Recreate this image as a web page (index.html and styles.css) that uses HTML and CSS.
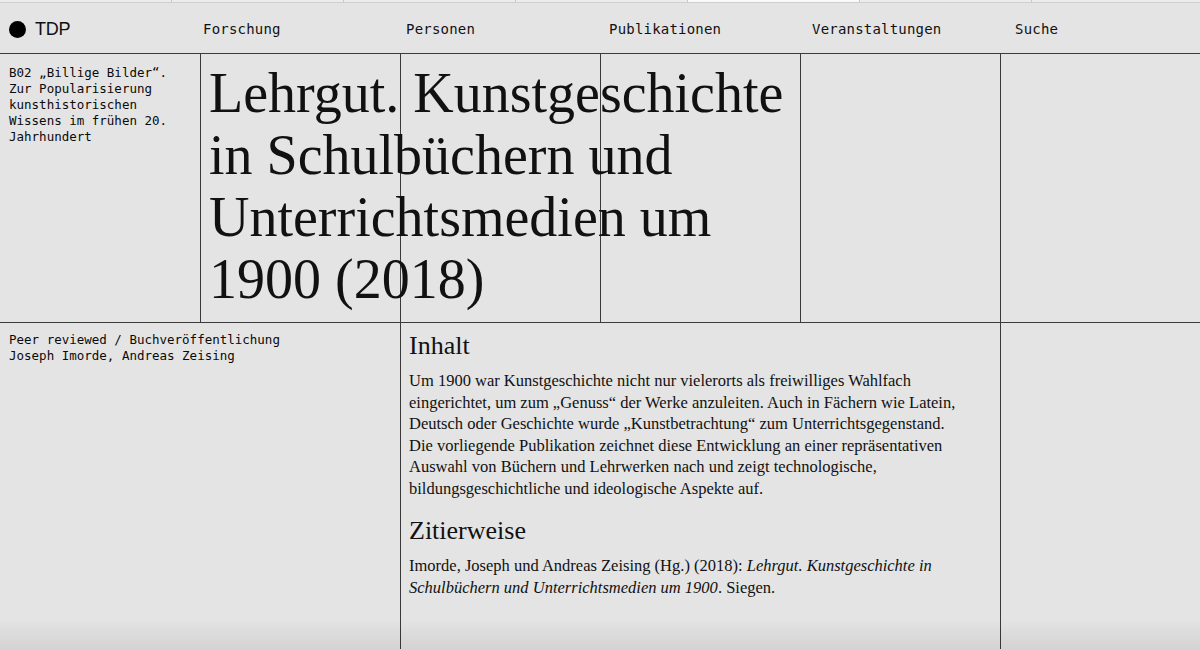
FILE: index.html
```html
<!DOCTYPE html>
<html lang="de">
<head>
<meta charset="utf-8">
<title>Lehrgut – TDP</title>
<link rel="stylesheet" href="styles.css">
</head>
<body>
<div class="tabs">
  <span class="tab"></span><span class="tab"></span><span class="tab"></span><span class="tab"></span><span class="tab active"></span><span class="tab"></span><span class="tab last"></span>
</div>
<header class="top">
  <div class="logo"><span class="dot"></span><span class="brand">TDP</span></div>
  <nav class="nav-item">Forschung</nav>
  <nav class="nav-item">Personen</nav>
  <nav class="nav-item">Publikationen</nav>
  <nav class="nav-item">Veranstaltungen</nav>
  <nav class="nav-item">Suche</nav>
</header>
<section class="row-one">
  <div class="cell c1"></div>
  <div class="cell c2 line"></div>
  <div class="cell c3 line"></div>
  <div class="cell c4 line"></div>
  <div class="cell c5 line"></div>
  <div class="cell c6 line"></div>
  <div class="project mono">B02 „Billige Bilder“.<br>Zur Popularisierung<br>kunsthistorischen<br>Wissens im frühen 20.<br>Jahrhundert</div>
  <h1 class="title">Lehrgut. Kunstgeschichte<br>in Schulbüchern und<br>Unterrichtsmedien um<br>1900 (2018)</h1>
</section>
<section class="row-two">
  <div class="meta mono">Peer reviewed / Buchveröffentlichung<br>Joseph Imorde, Andreas Zeising</div>
  <div class="content line">
    <h2 class="heading">Inhalt</h2>
    <p class="text">Um 1900 war Kunstgeschichte nicht nur vielerorts als freiwilliges Wahlfach<br>eingerichtet, um zum „Genuss“ der Werke anzuleiten. Auch in Fächern wie Latein,<br>Deutsch oder Geschichte wurde „Kunstbetrachtung“ zum Unterrichtsgegenstand.<br>Die vorliegende Publikation zeichnet diese Entwicklung an einer repräsentativen<br>Auswahl von Büchern und Lehrwerken nach und zeigt technologische,<br>bildungsgeschichtliche und ideologische Aspekte auf.</p>
    <h2 class="heading second">Zitierweise</h2>
    <p class="text">Imorde, Joseph und Andreas Zeising (Hg.) (2018): <em>Lehrgut. Kunstgeschichte in<br>Schulbüchern und Unterrichtsmedien um 1900</em>. Siegen.</p>
  </div>
  <div class="aside line"></div>
</section>
</body>
</html>
```
FILE: styles.css
```css
html, body {
  margin: 0;
  padding: 0;
  background: #e4e4e4;
  color: #111;
  height: 100%;
  overflow: hidden;
}
body::after {
  content: "";
  position: fixed;
  left: 0;
  right: 0;
  bottom: 0;
  height: 30px;
  background: linear-gradient(to bottom, rgba(0,0,0,0), rgba(0,0,0,0.07));
  pointer-events: none;
}
.tabs {
  display: flex;
  height: 2px;
  background: #ececec;
  border-bottom: 1px solid #cfcfcf;
}
.tab {
  width: 171px;
  border-right: 1px solid #c8c8c8;
}
.tab.active {
  background: #fafafa;
}
.tab.last {
  flex: 1;
  border-right: none;
}
.mono {
  font-family: "DejaVu Sans Mono", monospace;
  font-size: 12.5px;
  line-height: 16px;
  color: #0a0a0a;
}
.top {
  display: grid;
  grid-template-columns: repeat(5, 203px) 1fr;
  height: 51px;
  padding-top: 2px;
  box-sizing: border-box;
  align-items: center;
  border-bottom: 1px solid #3a3a3a;
}
.logo {
  display: flex;
  align-items: center;
  padding-left: 9px;
  gap: 9px;
}
.dot {
  width: 17px;
  height: 17px;
  border-radius: 50%;
  background: #000;
}
.brand {
  font-family: "Liberation Sans", Arial, sans-serif;
  font-size: 18px;
  letter-spacing: -0.2px;
}
.nav-item {
  font-family: "DejaVu Sans Mono", monospace;
  font-size: 14px;
  letter-spacing: 0.2px;
}
.row-one {
  display: grid;
  grid-template-columns: repeat(5, 200px) 1fr;
  height: 268px;
  border-bottom: 1px solid #3a3a3a;
}
.cell { grid-row: 1; }
.c1 { grid-column: 1; }
.c2 { grid-column: 2; }
.c3 { grid-column: 3; }
.c4 { grid-column: 4; }
.c5 { grid-column: 5; }
.c6 { grid-column: 6; }
.line {
  border-left: 1px solid #3a3a3a;
}
.project {
  grid-column: 1;
  grid-row: 1;
  padding: 11px 9px;
}
.title {
  grid-column: 2 / 5;
  grid-row: 1;
  margin: 0;
  padding: 8px 9px 0;
  font-family: "Liberation Serif", "Times New Roman", serif;
  font-weight: normal;
  font-size: 56px;
  line-height: 62px;
  letter-spacing: 0;
  white-space: nowrap;
}
.row-two {
  display: grid;
  grid-template-columns: 400px 600px 1fr;
  min-height: 340px;
}
.meta {
  padding: 9px 9px;
}
.content {
  padding: 8px 9px 0 8px;
}
.heading {
  margin: 0;
  font-family: "Liberation Serif", "Times New Roman", serif;
  font-weight: normal;
  font-size: 26px;
  line-height: 30px;
}
.heading.second {
  margin-top: 17px;
}
.text {
  margin: 9px 0 0;
  font-family: "Liberation Serif", "Times New Roman", serif;
  font-size: 16.5px;
  line-height: 21.5px;
  white-space: nowrap;
}
```
